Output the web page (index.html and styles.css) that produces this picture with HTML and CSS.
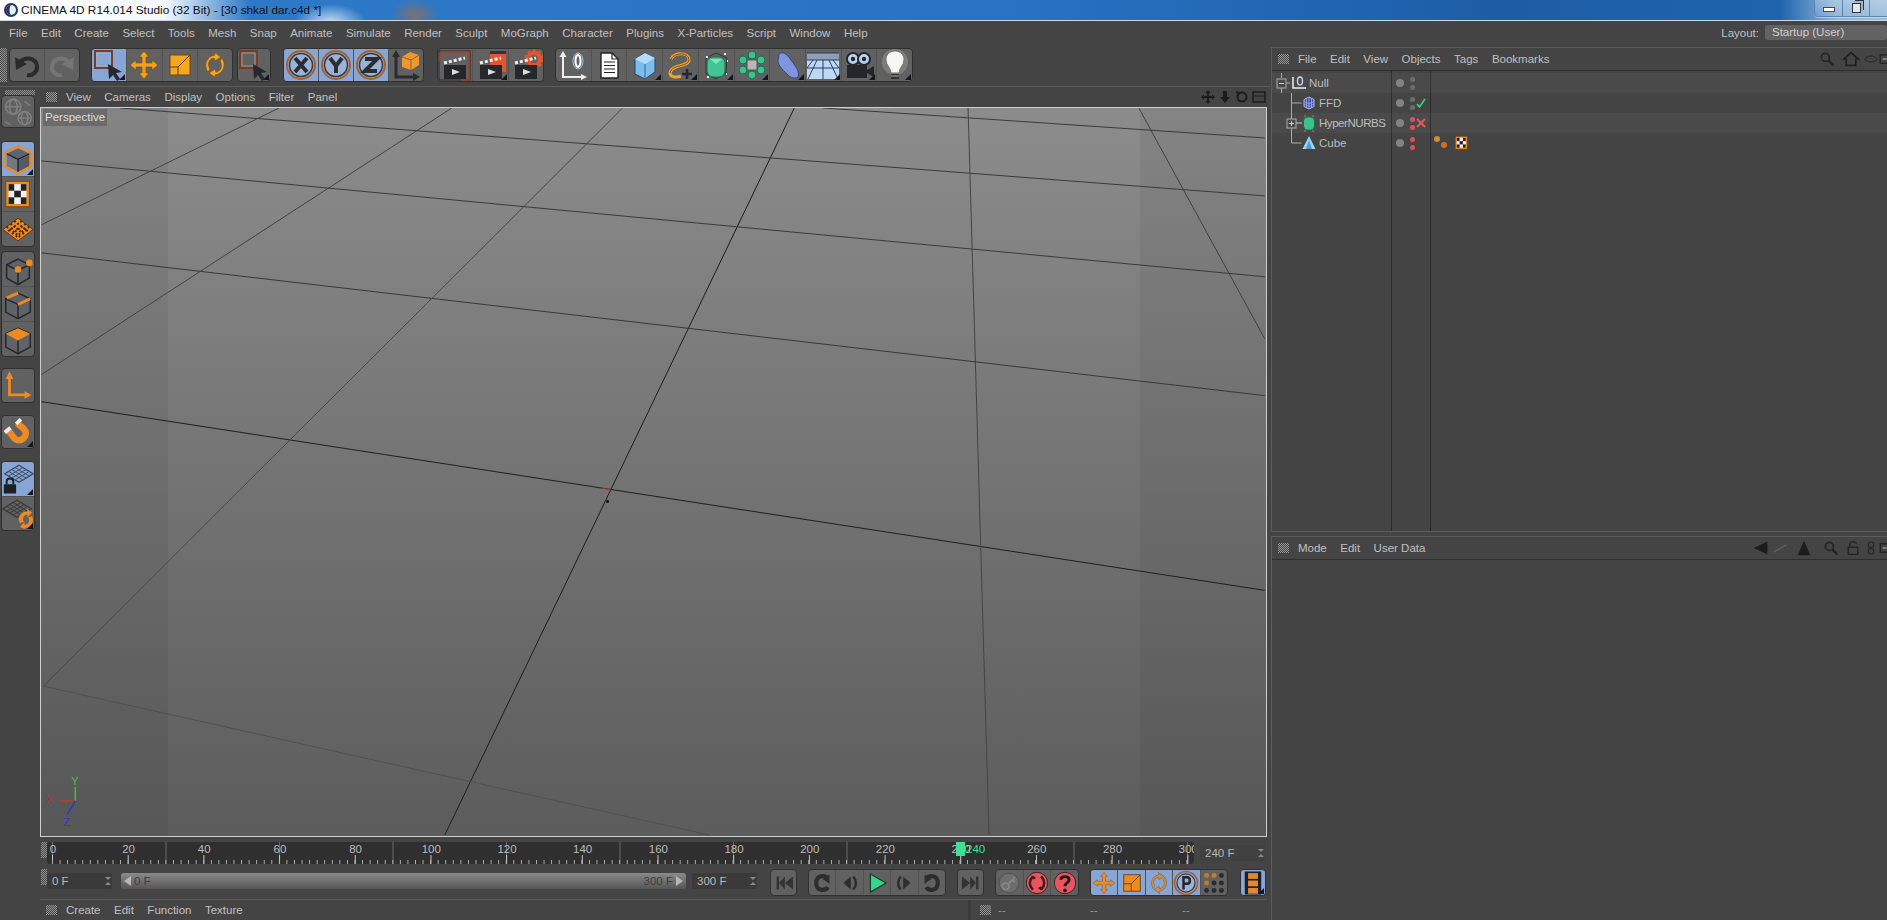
FILE: index.html
```html
<!DOCTYPE html>
<html lang="en">
<head>
<meta charset="utf-8">
<title>CINEMA 4D R14.014 Studio</title>
<link rel="stylesheet" href="styles.css">
</head>
<body>
<svg class="sprite" aria-hidden="true">
  <symbol id="i-undo" viewBox="0 0 36 34"><path d="M11 14c6-6 16-4 17 4 1 6-5 10-10 9" fill="none" stroke="#2b2b2b" stroke-width="4"/><path d="M6 9l1 13 11-6z" fill="#2b2b2b"/></symbol>
  <symbol id="i-redo" viewBox="0 0 36 34"><path d="M25 14c-6-6-16-4-17 4-1 6 5 10 10 9" fill="none" stroke="#757575" stroke-width="4"/><path d="M30 9l-1 13-11-6z" fill="#757575"/></symbol>
  <symbol id="i-select" viewBox="0 0 36 34"><rect x="4" y="3" width="17" height="17" fill="none" stroke="#7a3a30" stroke-width="2"/><rect x="6" y="5" width="13" height="13" fill="none" stroke="#b9b0a8" stroke-width=".7"/><path d="M17 16l14 8-6 1 4 6-3 2-4-6-4 4z" fill="#26282c"/></symbol>
  <symbol id="i-move" viewBox="0 0 36 34"><path d="M18 3l5 6h-3v6h6v-3l6 5-6 5v-3h-6v6h3l-5 6-5-6h3v-6h-6v3l-6-5 6-5v3h6V9h-3z" fill="#f0a01e" stroke="#6b4a18" stroke-width=".6"/></symbol>
  <symbol id="i-scale" viewBox="0 0 36 34"><rect x="8" y="7" width="20" height="20" fill="#f5a81e" stroke="#6b4a18"/><path d="M16 19L28 7M8 19h8v8" fill="none" stroke="#5a3d10" stroke-width="1"/></symbol>
  <symbol id="i-rotate" viewBox="0 0 36 34"><path d="M11 24C6 17 10 8 18 7l-1-3 7 5-6 4-1-3c-5 1-7 6-4 11zM25 10c5 7 1 16-7 17l1 3-7-5 6-4 1 3c5-1 7-6 4-11z" fill="#f3a51f" stroke="#6b4a18" stroke-width=".6"/></symbol>
  <symbol id="i-x" viewBox="0 0 36 34"><circle cx="18" cy="17" r="14" fill="none" stroke="#a8602c" stroke-width="2"/><circle cx="18" cy="17" r="11.5" fill="#9bb2d6" stroke="#3a3a3a" stroke-width="1.5"/><path d="M12 10l12 14M24 10L12 24" stroke="#2a2d33" stroke-width="4"/></symbol>
  <symbol id="i-y" viewBox="0 0 36 34"><circle cx="18" cy="17" r="14" fill="none" stroke="#a8602c" stroke-width="2"/><circle cx="18" cy="17" r="11.5" fill="#9bb2d6" stroke="#3a3a3a" stroke-width="1.5"/><path d="M12 10l6 8 6-8M18 17v8" fill="none" stroke="#2a2d33" stroke-width="4"/></symbol>
  <symbol id="i-z" viewBox="0 0 36 34"><circle cx="18" cy="17" r="14" fill="none" stroke="#a8602c" stroke-width="2"/><circle cx="18" cy="17" r="11.5" fill="#9bb2d6" stroke="#3a3a3a" stroke-width="1.5"/><path d="M12 11h12L12 23h12" fill="none" stroke="#2a2d33" stroke-width="4"/></symbol>
  <symbol id="i-coord" viewBox="0 0 36 34"><path d="M8 6v23h20" fill="none" stroke="#2b2c30" stroke-width="3"/><path d="M8 2l4 7H4zM32 29l-7 4v-8z" fill="#2b2c30"/><path d="M14 9l8-5 9 3v10l-8 5-9-3z" fill="#ee9830"/><path d="M14 9l9 3 8-5M23 12v10" fill="none" stroke="#a85f14"/></symbol>
  <symbol id="i-clap" viewBox="0 0 36 34"><rect x="7" y="17" width="22" height="14" fill="#26272a"/><path d="M7 15l21-5" stroke="#eee" stroke-width="3" stroke-dasharray="3 2"/><path d="M15 21l8 3-8 3z" fill="#ddd"/></symbol>
  <symbol id="i-render1" viewBox="0 0 36 34"><rect x="2" y="3" width="31" height="29" fill="none" stroke="#2a2a2a"/><path d="M3 4h29v28h-8" fill="none" stroke="#a83f2b" stroke-width="1.6"/><path d="M3 4v9" stroke="#a83f2b" stroke-width="1.6"/><use href="#i-clap"/></symbol>
  <symbol id="i-render2" viewBox="0 0 36 34"><rect x="17" y="3" width="16" height="21" fill="#e2562b"/><rect x="17" y="3" width="16" height="3" fill="#333"/><use href="#i-clap"/></symbol>
  <symbol id="i-render3" viewBox="0 0 36 34"><circle cx="26" cy="11" r="6" fill="none" stroke="#e2562b" stroke-width="4"/><circle cx="26" cy="11" r="8.5" fill="none" stroke="#e2562b" stroke-width="2.5" stroke-dasharray="3 2.5"/><use href="#i-clap"/></symbol>
  <symbol id="i-null" viewBox="0 0 36 34"><path d="M8 7v22h20" fill="none" stroke="#eee" stroke-width="2"/><path d="M8 3l3.500 6h-7zM32 29l-6 3v-6z" fill="#eee"/><ellipse cx="23" cy="13" rx="5" ry="8" fill="none" stroke="#a8c6ec" stroke-width="1"/><ellipse cx="23" cy="13" rx="2.500" ry="6" fill="none" stroke="#fff" stroke-width="2"/></symbol>
  <symbol id="i-doc" viewBox="0 0 36 34"><path d="M10 5h11l6 6v19H10z" fill="#fff" stroke="#222" stroke-width="1.400"/><path d="M21 5v6h6M13 14h11M13 17.500h11M13 21h11M13 24.500h11" fill="none" stroke="#222" stroke-width="1.200"/></symbol>
  <symbol id="i-cube" viewBox="0 0 36 34"><path d="M8 11l10-6 10 5v14l-10 7-10-5z" fill="#7bbdee" stroke="#2a4868"/><path d="M8 11l10 5 10-6-10-5z" fill="#b5dcf8"/><path d="M18 16v15" stroke="#3a6790"/></symbol>
  <symbol id="i-spline" viewBox="0 0 36 34"><path d="M9 11c4-7 18-7 18 1 0 7-18 4-19 13 0 4 6 5 11 3" fill="none" stroke="#f0a428" stroke-width="3"/><path d="M9 11c4-7 18-7 18 1 0 7-18 4-19 13" fill="none" stroke="#222" stroke-width=".6"/><path d="M25 21v10M20 26h10" stroke="#26282c" stroke-width="2.600"/></symbol>
  <symbol id="i-subd" viewBox="0 0 36 34"><path d="M8 10l10-5 11 5-1 15-10 6-10-5z" fill="none" stroke="#333" stroke-width="1"/><rect x="9" y="9" width="18" height="20" rx="6" fill="#43c492" stroke="#1d6d50"/><path d="M12 11h12l-6 5z" fill="#7fe4bd"/><path d="M8 9h2M26 6h2M29 13h1M9 29h2M28 26h1" stroke="#eee" stroke-width="2"/></symbol>
  <symbol id="i-cloner" viewBox="0 0 36 34"><g fill="#3cc08c" stroke="#1d6d50"><circle cx="18" cy="7" r="4"/><circle cx="27" cy="12" r="4"/><circle cx="27" cy="22" r="4"/><circle cx="18" cy="27" r="4"/><circle cx="9" cy="22" r="4"/><circle cx="9" cy="12" r="4"/></g><rect x="13" y="12" width="10" height="10" fill="#b8b8b8" stroke="#555"/></symbol>
  <symbol id="i-bend" viewBox="0 0 36 34"><path d="M9 6c4-3 8 0 12 6s9 11 7 17c-3 2-7 1-10-2S8 18 8 13z" fill="#7f95e0" stroke="#37457e"/></symbol>
  <symbol id="i-floor" viewBox="0 0 36 34"><rect x="2" y="5" width="32" height="26" fill="#bcd8f8"/><rect x="2" y="5" width="32" height="7" fill="#8d9fb6"/><path d="M2 5h32M2 12h32M2 20h32M18 12v19M12 12L3 31M24 12l9 19M8 12l-6 8M28 12l6 8" fill="none" stroke="#2d3f5a" stroke-width="1"/></symbol>
  <symbol id="i-camera" viewBox="0 0 36 34"><rect x="6" y="17" width="20" height="13" fill="#24262b"/><path d="M26 22l7-4v11l-7-4z" fill="#24262b"/><circle cx="12" cy="11" r="6" fill="#b6d4f2" stroke="#24262b" stroke-width="2"/><circle cx="23" cy="11" r="6" fill="#b6d4f2" stroke="#24262b" stroke-width="2"/><circle cx="12" cy="11" r="2.200" fill="#24262b"/><circle cx="23" cy="11" r="2.200" fill="#24262b"/></symbol>
  <symbol id="i-light" viewBox="0 0 36 34"><circle cx="18" cy="14" r="13" fill="#fff" opacity=".18"/><path d="M18 3c6 0 9 4 9 9 0 5-5 8-5 13h-8c0-5-5-8-5-13 0-5 3-9 9-9z" fill="#f6f6f2" stroke="#777"/><path d="M14 26h8v5h-8z" fill="#333"/><path d="M14 28h8" stroke="#aaa"/></symbol>
  <symbol id="i-modeobj" viewBox="0 0 36 34"><path d="M18 3l14 7v14l-14 8-14-8V10z" fill="none" stroke="#ee8a22" stroke-width="2.500"/><path d="M6 11l12 6 12-6-12-6z" fill="#5c6470"/><path d="M6 12l12 6v12L6 24z" fill="#74777c"/><path d="M30 12l-12 6v12l12-6z" fill="#575a60"/><path d="M6 11l12 6 12-6M18 17v13" fill="none" stroke="#25272b" stroke-width="1.600"/></symbol>
  <symbol id="i-check" viewBox="0 0 36 34"><rect x="5" y="3" width="25" height="27" fill="#ee8a22" stroke="#7a4010"/><rect x="8" y="6" width="19" height="21" fill="#f2f2f2"/><g fill="#222"><rect x="8" y="6" width="6" height="7"/><rect x="21" y="6" width="6" height="7"/><rect x="14" y="13" width="7" height="7"/><rect x="8" y="20" width="6" height="7"/><rect x="21" y="20" width="6" height="7"/></g></symbol>
  <symbol id="i-gridmode" viewBox="0 0 36 34"><path d="M18 5l16 12-16 12L2 17z" fill="#ee8a22" stroke="#5f3410"/><path d="M10 11l16 12M14 8l16 12M6 14l16 12M26 11L10 23M22 8L6 20M30 14L14 26" stroke="#4a2a0e" stroke-width="2.200" stroke-dasharray="2 2"/></symbol>
  <symbol id="i-pts" viewBox="0 0 36 34"><path d="M18 6l12 6v14l-12 7-12-7V12z" fill="#5f6267" stroke="#25272b" stroke-width="1.600"/><path d="M6 12l12 6 12-6M18 18v15" fill="none" stroke="#25272b" stroke-width="1.600"/><circle cx="18" cy="17" r="3.500" fill="#ee8a22"/><circle cx="30" cy="10" r="3.500" fill="#ee8a22"/></symbol>
  <symbol id="i-edges" viewBox="0 0 36 34"><path d="M18 5l13 6v14l-13 7-13-7V11z" fill="#5f6267" stroke="#25272b" stroke-width="1.600"/><path d="M5 11l13 6 13-6M18 17v15" fill="none" stroke="#25272b" stroke-width="1.600"/><path d="M6 10l12-5M18 17l13-6" stroke="#ee8a22" stroke-width="3"/></symbol>
  <symbol id="i-polys" viewBox="0 0 36 34"><path d="M18 5l13 6v14l-13 7-13-7V11z" fill="#5f6267" stroke="#25272b" stroke-width="1.600"/><path d="M5 11l13 7 13-7-13-6z" fill="#ee8a22"/><path d="M18 18v14" stroke="#25272b" stroke-width="1.600"/></symbol>
  <symbol id="i-axes" viewBox="0 0 36 34"><path d="M9 8v19h21" fill="none" stroke="#ee8a22" stroke-width="3"/><path d="M9 2l4 8H5zM32 27l-7 4v-8z" fill="#ee8a22"/></symbol>
  <symbol id="i-magnet" viewBox="0 0 36 34"><path d="M8 15l6 8c3 3 7 3 10 0 3-3 3-7 0-10l-7-6" fill="none" stroke="#ee8a22" stroke-width="7"/><path d="M4 17l6-5M16 8l5-5" stroke="#eee" stroke-width="4"/></symbol>
  <symbol id="i-gridlock" viewBox="0 0 36 34"><path d="M19 3l15 9-15 9-15-9z" fill="none" stroke="#3c4a60" stroke-width="1.300"/><path d="M11.500 7.500l15 9M15 5.500l15 9M8 9.500l15 9M26.500 7.500l-15 9M23 5.500l-15 9M30 9.500l-15 9" stroke="#3c4a60" stroke-width="1"/><rect x="3" y="23" width="13" height="10" rx="1" fill="#1d2026"/><path d="M6 23v-3c0-4 7-4 7 0v3" fill="none" stroke="#1d2026" stroke-width="2"/></symbol>
  <symbol id="i-gridrot" viewBox="0 0 36 34"><path d="M17 3l15 9-15 9-15-9z" fill="none" stroke="#383838" stroke-width="1.300"/><path d="M9.500 7.500l15 9M13 5.500l15 9M6 9.500l15 9M24.500 7.500l-15 9M21 5.500l-15 9M28 9.500l-15 9" stroke="#383838" stroke-width="1"/><path d="M20 27c-4-7 3-13 8-12l-1-3 6 4-5 5v-3c-3 0-6 3-4 8zM33 20c3 7-3 13-8 12l1 2-6-3 5-5v3c4 0 6-4 4-8z" fill="#ee8a22"/></symbol>
  <symbol id="i-tstart" viewBox="0 0 36 34"><path d="M9 9h3v16H9zM19 9v16l-7-8zM29 9v16l-10-8z" fill="#333"/></symbol>
  <symbol id="i-tend" viewBox="0 0 36 34"><path d="M27 9h-3v16h3zM17 9v16l7-8zM7 9v16l10-8z" fill="#333"/></symbol>
  <symbol id="i-cback" viewBox="0 0 36 34"><path d="M25 12c-3-5-14-5-14 5s11 10 14 5" fill="none" stroke="#2d2d2d" stroke-width="5"/><path d="M27 7v11l-8-6z" fill="#2d2d2d"/></symbol>
  <symbol id="i-cfwd" viewBox="0 0 36 34"><path d="M11 12c3-5 14-5 14 5s-11 10-14 5" fill="none" stroke="#2d2d2d" stroke-width="5"/><path d="M9 7v11l8-6z" fill="#2d2d2d"/></symbol>
  <symbol id="i-sback" viewBox="0 0 36 34"><path d="M19 9v16l-9-8z" fill="#2d2d2d"/><path d="M22 9c4 5 4 11 0 16" fill="none" stroke="#2d2d2d" stroke-width="3"/></symbol>
  <symbol id="i-sfwd" viewBox="0 0 36 34"><path d="M17 9v16l9-8z" fill="#2d2d2d"/><path d="M14 9c-4 5-4 11 0 16" fill="none" stroke="#2d2d2d" stroke-width="3"/></symbol>
  <symbol id="i-play" viewBox="0 0 36 34"><path d="M10 6l19 11-19 11z" fill="#35d58e" stroke="#123d2a" stroke-width="1.500"/></symbol>
  <symbol id="i-key" viewBox="0 0 36 34"><circle cx="18" cy="17" r="12" fill="#6e6e6e" stroke="#4d4d4d"/><circle cx="14" cy="21" r="4" fill="none" stroke="#888" stroke-width="2"/><path d="M17 18l8-8M22 13l3 3" stroke="#888" stroke-width="2"/></symbol>
  <symbol id="i-rec" viewBox="0 0 36 34"><circle cx="18" cy="17" r="13" fill="#e8545f" stroke="#3a2222" stroke-width="1.200"/><path d="M13 9c-5 5-5 11 0 16M23 9c5 5 5 11 0 16" fill="none" stroke="#3a1d1d" stroke-width="3"/><path d="M13 8l4 3-4 2zM23 26l-4-3 4-2z" fill="#3a1d1d"/></symbol>
  <symbol id="i-help" viewBox="0 0 36 34"><circle cx="18" cy="17" r="13" fill="#e8545f" stroke="#3a2222" stroke-width="1.200"/><path d="M13 13c0-5 10-5 10 0 0 4-5 3-5 8" fill="none" stroke="#2a1414" stroke-width="3.500"/><circle cx="18" cy="26" r="2.200" fill="#2a1414"/></symbol>
  <symbol id="i-moveo" viewBox="0 0 36 34"><path d="M18 4l4 5h-2v6h6v-2l5 4-5 4v-2h-6v6h2l-4 5-4-5h2v-6h-6v2l-5-4 5-4v2h6V9h-2z" fill="#ee8a22" stroke="#6b4a18" stroke-width=".5"/></symbol>
  <symbol id="i-scaleo" viewBox="0 0 36 34"><rect x="8" y="7" width="20" height="20" fill="#ee8a22" stroke="#5b3a10"/><path d="M17 18L28 7M8 18h9v9" fill="none" stroke="#5b3a10"/></symbol>
  <symbol id="i-roto" viewBox="0 0 36 34"><path d="M11 24C6 17 10 8 18 7l-1-3 7 5-6 4-1-3c-5 1-7 6-4 11zM25 10c5 7 1 16-7 17l1 3-7-5 6-4 1 3c5-1 7-6 4-11z" fill="#d98b3c" stroke="#5d4a35" stroke-width=".5"/></symbol>
  <symbol id="i-p" viewBox="0 0 36 34"><circle cx="18" cy="17" r="14" fill="none" stroke="#a8602c" stroke-width="2"/><circle cx="18" cy="17" r="11" fill="#9bb2d6" stroke="#3a3a3a" stroke-width="1.500"/><path d="M15 25V10h4c5 0 5 8 0 8h-4" fill="none" stroke="#22252b" stroke-width="3"/></symbol>
  <symbol id="i-dots" viewBox="0 0 36 34"><g fill="#2b2b2b"><circle cx="9" cy="8" r="3" fill="#c27a2d"/><circle cx="18" cy="8" r="3" fill="#c27a2d"/><circle cx="27" cy="8" r="3"/><circle cx="9" cy="17" r="3" fill="#c27a2d"/><circle cx="18" cy="17" r="3"/><circle cx="27" cy="17" r="3"/><circle cx="9" cy="26" r="3"/><circle cx="18" cy="26" r="3"/><circle cx="27" cy="26" r="3"/></g></symbol>
  <symbol id="i-film" viewBox="0 0 36 34"><rect x="8" y="3" width="20" height="28" fill="#1d2026"/><rect x="12" y="5" width="12" height="7" fill="#e28b2e"/><rect x="12" y="14" width="12" height="7" fill="#e28b2e"/><rect x="12" y="23" width="12" height="7" fill="#e28b2e"/></symbol>
  <symbol id="i-search" viewBox="0 0 20 20"><circle cx="8" cy="8" r="5" fill="none" stroke="#242424" stroke-width="2"/><path d="M12 12l6 6" stroke="#242424" stroke-width="3"/></symbol>
  <symbol id="i-home" viewBox="0 0 20 20"><path d="M10 2L1 10h3v8h12v-8h3z" fill="none" stroke="#1f1f1f" stroke-width="2"/></symbol>
  <symbol id="i-eye" viewBox="0 0 20 20"><path d="M2 10c4-5 12-5 16 0-4 5-12 5-16 0z" fill="none" stroke="#222" stroke-width="1.200"/></symbol>
  <symbol id="i-box" viewBox="0 0 20 20"><rect x="2" y="3" width="15" height="14" fill="none" stroke="#202020" stroke-width="2"/><path d="M6 10h7" stroke="#888" stroke-width="3"/></symbol>
  <symbol id="i-left" viewBox="0 0 20 20"><path d="M18 2v16L1 10z" fill="#1d1d1d"/></symbol>
  <symbol id="i-slash" viewBox="0 0 20 20"><path d="M2 15L18 6" stroke="#5c5c5c" stroke-width="2"/></symbol>
  <symbol id="i-up" viewBox="0 0 20 20"><path d="M10 1l8 18H2z" fill="#1d1d1d"/></symbol>
  <symbol id="i-lock" viewBox="0 0 20 20"><rect x="4" y="9" width="12" height="9" fill="none" stroke="#222" stroke-width="1.500"/><path d="M6 9V5c0-4 8-4 8 0" fill="none" stroke="#222" stroke-width="1.500"/></symbol>
  <symbol id="i-eight" viewBox="0 0 20 20"><circle cx="10" cy="6" r="3.500" fill="none" stroke="#222" stroke-width="1.300"/><circle cx="10" cy="14" r="3.500" fill="none" stroke="#222" stroke-width="1.300"/></symbol>
  <symbol id="i-arrows" viewBox="0 0 14 14"><path d="M7 0l2.500 3H8v3h3V4.500L14 7l-3 2.500V8H8v3h1.500L7 14l-2.500-3H6V8H3v1.500L0 7l3-2.500V6h3V3H4.500z" fill="#1c1c1c"/></symbol>
  <symbol id="i-down" viewBox="0 0 14 14"><path d="M5 1h4v6h3l-5 6-5-6h3z" fill="#1c1c1c"/></symbol>
  <symbol id="i-cycle" viewBox="0 0 14 14"><circle cx="7" cy="7" r="4.500" fill="none" stroke="#1c1c1c" stroke-width="2"/><path d="M1 1l4 1-3 3z" fill="#1c1c1c"/></symbol>
  <symbol id="i-win" viewBox="0 0 14 14"><rect x="1" y="2" width="12" height="10" fill="none" stroke="#1c1c1c" stroke-width="1.500"/><path d="M1 6h12" stroke="#1c1c1c"/></symbol>
  <symbol id="i-home3d" viewBox="0 0 36 34"><g fill="none" stroke="#858585" stroke-width="1.500"><circle cx="13" cy="12" r="8"/><ellipse cx="13" cy="12" rx="4" ry="8"/><path d="M5 12h16"/><circle cx="25" cy="24" r="7"/><ellipse cx="25" cy="24" rx="3.500" ry="7"/><path d="M18 24h14M25 6l6 5M4 28l6 3"/></g></symbol>
</svg>

<header class="titlebar">
  <svg class="app-logo" viewBox="0 0 16 16"><circle cx="8" cy="8" r="7" fill="#22365c"/><circle cx="8" cy="8" r="5" fill="#e8eef8"/><path d="M8 3a5 5 0 0 0 0 10c-2-2-2-8 0-10z" fill="#22365c"/></svg>
  <span class="title-text">CINEMA 4D R14.014 Studio (32 Bit) - [30 shkal dar.c4d *]</span>
  <div class="win-btns">
    <span class="win-btn"><i class="win-min"></i></span>
    <span class="win-btn"><i class="win-max"></i></span>
    <span class="win-btn win-close"></span>
  </div>
</header>

<nav class="menubar">
  <span>File</span><span>Edit</span><span>Create</span><span>Select</span><span>Tools</span><span>Mesh</span><span>Snap</span><span>Animate</span><span>Simulate</span><span>Render</span><span>Sculpt</span><span>MoGraph</span><span>Character</span><span>Plugins</span><span>X-Particles</span><span>Script</span><span>Window</span><span>Help</span>
  <div class="layout-pick"><label>Layout:</label><span class="dropdown">Startup (User)</span></div>
</nav>

<div class="workspace">
  <section class="leftcol">
    <div class="toolbar">
      <span class="grip grip-tall"></span>
      <div class="grp g1"><span class="btn"><svg><use href="#i-undo"/></svg></span><span class="btn"><svg><use href="#i-redo"/></svg></span></div>
      <div class="grp g2"><span class="btn on more"><svg><use href="#i-select"/></svg></span><span class="btn"><svg><use href="#i-move"/></svg></span><span class="btn"><svg><use href="#i-scale"/></svg></span><span class="btn"><svg><use href="#i-rotate"/></svg></span></div>
      <div class="grp g3"><span class="btn more"><svg><use href="#i-select"/></svg></span></div>
      <div class="grp g4"><span class="btn on"><svg><use href="#i-x"/></svg></span><span class="btn on"><svg><use href="#i-y"/></svg></span><span class="btn on"><svg><use href="#i-z"/></svg></span><span class="btn"><svg><use href="#i-coord"/></svg></span></div>
      <div class="grp g5"><span class="btn"><svg><use href="#i-render1"/></svg></span><span class="btn more"><svg><use href="#i-render2"/></svg></span><span class="btn"><svg><use href="#i-render3"/></svg></span></div>
      <div class="grp g6"><span class="btn"><svg><use href="#i-null"/></svg></span><span class="btn"><svg><use href="#i-doc"/></svg></span><span class="btn more"><svg><use href="#i-cube"/></svg></span><span class="btn more"><svg><use href="#i-spline"/></svg></span><span class="btn more"><svg><use href="#i-subd"/></svg></span><span class="btn more"><svg><use href="#i-cloner"/></svg></span><span class="btn more"><svg><use href="#i-bend"/></svg></span><span class="btn more"><svg><use href="#i-floor"/></svg></span><span class="btn more"><svg><use href="#i-camera"/></svg></span><span class="btn more"><svg><use href="#i-light"/></svg></span></div>
    </div>

    <div class="view-row">
      <aside class="sidebar">
        <span class="grip grip-wide"></span>
        <div class="grp col s1"><span class="btn"><svg><use href="#i-home3d"/></svg></span></div>
        <div class="grp col s2"><span class="btn on more"><svg><use href="#i-modeobj"/></svg></span><span class="btn"><svg><use href="#i-check"/></svg></span><span class="btn"><svg><use href="#i-gridmode"/></svg></span></div>
        <div class="grp col s3"><span class="btn"><svg><use href="#i-pts"/></svg></span><span class="btn"><svg><use href="#i-edges"/></svg></span><span class="btn"><svg><use href="#i-polys"/></svg></span></div>
        <div class="grp col s4"><span class="btn"><svg><use href="#i-axes"/></svg></span></div>
        <div class="grp col s5"><span class="btn more"><svg><use href="#i-magnet"/></svg></span></div>
        <div class="grp col s6"><span class="btn on more"><svg><use href="#i-gridlock"/></svg></span><span class="btn more"><svg><use href="#i-gridrot"/></svg></span></div>
      </aside>

      <main class="viewcol">
        <div class="panel-head view-head">
          <span class="grip"></span>
          <span>View</span><span>Cameras</span><span>Display</span><span>Options</span><span>Filter</span><span>Panel</span>
          <div class="head-icons"><svg><use href="#i-arrows"/></svg><svg><use href="#i-down"/></svg><svg><use href="#i-cycle"/></svg><svg><use href="#i-win"/></svg></div>
        </div>
        <div class="canvas">
          <svg class="scene" viewBox="41 108 1226 729">
            <g fill="none">
              <path d="M41 402L1266 591" stroke="#1e1e1e"/>
              <path d="M445 836L795 108" stroke="#1c1c1c"/>
              <path d="M969 108L990 836" stroke="#444"/>
              <path d="M41 161L1266 277" stroke="#3a3a3a"/>
              <path d="M41 253L1266 396" stroke="#383838"/>
              <path d="M120 108L1266 196" stroke="#3a3a3a"/>
              <path d="M824 108L1266 138" stroke="#3a3a3a"/>
              <path d="M43 687L710 836" stroke="#505050"/>
              <path d="M1140 108L1266 339" stroke="#404040"/>
              <path d="M623 108L43 687" stroke="#484848"/>
              <path d="M452 108L41 375" stroke="#424242"/>
              <path d="M279 108L41 225" stroke="#424242"/>
            </g>
            <path d="M603 489l8 1" stroke="#b33" stroke-width="1"/>
            <circle cx="608" cy="502" r="1.500" fill="#111"/>
            <path d="M75 802V788" stroke="#3ec13e" stroke-width="1.500"/>
            <path d="M75 802H59" stroke="#c33" stroke-width="1.500"/>
            <path d="M75 802L67 815" stroke="#33c" stroke-width="1.500"/>
            <text x="71" y="786" class="ax ax-y">Y</text>
            <text x="46" y="804" class="ax ax-x">X</text>
            <text x="63" y="827" class="ax ax-z">Z</text>
          </svg>
          <span class="persp">Perspective</span>
        </div>
        <div class="timeline">
          <span class="grip grip-time"></span>
          <div class="ruler">
            <div class="ruler-labels"><span>0</span><span>20</span><span>40</span><span>60</span><span>80</span><span>100</span><span>120</span><span>140</span><span>160</span><span>180</span><span>200</span><span>220</span><span>240</span><span>260</span><span>280</span><span>300</span></div>
            <span class="playhead"><em>240</em></span>
          </div>
          <span class="frame-field cur">240 F<i class="spin"></i></span>
        </div>
        <div class="transport">
          <span class="grip grip-time"></span>
          <span class="frame-field start">0 F<i class="spin"></i></span>
          <div class="slider"><i class="sl-left"></i><span>0 F</span><span class="sl-end">300 F</span><i class="sl-right"></i></div>
          <span class="frame-field end">300 F<i class="spin"></i></span>
          <div class="grp t1"><span class="btn"><svg><use href="#i-tstart"/></svg></span></div>
          <div class="grp t2"><span class="btn"><svg><use href="#i-cback"/></svg></span><span class="btn"><svg><use href="#i-sback"/></svg></span><span class="btn"><svg><use href="#i-play"/></svg></span><span class="btn"><svg><use href="#i-sfwd"/></svg></span><span class="btn"><svg><use href="#i-cfwd"/></svg></span></div>
          <div class="grp t3"><span class="btn"><svg><use href="#i-tend"/></svg></span></div>
          <div class="grp t4"><span class="btn"><svg><use href="#i-key"/></svg></span><span class="btn"><svg><use href="#i-rec"/></svg></span><span class="btn"><svg><use href="#i-help"/></svg></span></div>
          <div class="grp t5"><span class="btn on"><svg><use href="#i-moveo"/></svg></span><span class="btn on"><svg><use href="#i-scaleo"/></svg></span><span class="btn on"><svg><use href="#i-roto"/></svg></span><span class="btn on"><svg><use href="#i-p"/></svg></span><span class="btn"><svg><use href="#i-dots"/></svg></span></div>
          <div class="grp t6"><span class="btn on more"><svg><use href="#i-film"/></svg></span></div>
        </div>
        <div class="bottom">
          <div class="panel-head mat-head"><span class="grip"></span><span>Create</span><span>Edit</span><span>Function</span><span>Texture</span></div>
          <div class="panel-head coord-head"><span class="grip"></span><span>--</span><span>--</span><span>--</span></div>
        </div>
      </main>
    </div>
  </section>

  <section class="rightcol">
    <div class="panel objects">
      <div class="panel-head">
        <span class="grip"></span>
        <span>File</span><span>Edit</span><span>View</span><span>Objects</span><span>Tags</span><span>Bookmarks</span>
        <div class="head-icons big"><svg class="w24"><use href="#i-search"/></svg><svg class="w24"><use href="#i-home"/></svg><svg class="w16"><use href="#i-eye"/></svg><svg class="w12"><use href="#i-box"/></svg></div>
      </div>
      <div class="list">
        <div class="row odd">
          <div class="name">
            <svg class="tree w37" viewBox="0 0 37 20"><path d="M9.500 0v5M9.500 15v5M14 10h4" stroke="#aaa" fill="none"/><rect x="5" y="6" width="9" height="9" fill="none" stroke="#aaa"/><path d="M7 10.500h5" stroke="#ccc"/><path d="M21 4v11h13" fill="none" stroke="#eee" stroke-width="1.500"/><ellipse cx="28" cy="8" rx="2.500" ry="4" fill="none" stroke="#cfe0f5" stroke-width="1.300"/></svg>
            <span>Null</span>
          </div>
          <div class="vis"><b class="dot"></b><span class="mini"><b></b><b></b></span></div>
        </div>
        <div class="row">
          <div class="name">
            <svg class="tree w47" viewBox="0 0 47 20"><path d="M19.500 0v20M19.500 10h10" stroke="#aaa" fill="none"/><path d="M37 4l5 2.500v7L37 16l-5-2.500v-7z" fill="#3e4fa8" stroke="#aeb9e6"/><path d="M32 8.500l5 2.500 5-2.500M32 11l5 2.500 5-2.500M37 4.500V16M34.500 5.500v9.500M39.500 5.500v9.500" fill="none" stroke="#aeb9e6" stroke-width=".7"/></svg>
            <span>FFD</span>
          </div>
          <div class="vis"><b class="dot"></b><span class="mini"><b></b><b></b></span><svg class="flag" viewBox="0 0 10 10"><path d="M1 6l2.500 3L9 1" fill="none" stroke="#41d08d" stroke-width="1.600"/></svg></div>
        </div>
        <div class="row odd">
          <div class="name">
            <svg class="tree w47" viewBox="0 0 47 20"><path d="M19.500 0v6M19.500 15v5" stroke="#aaa" fill="none"/><rect x="15" y="6" width="9" height="9" fill="none" stroke="#aaa"/><path d="M17 10.500h5M19.500 8v5M24 10h6" stroke="#ccc"/><rect x="31.500" y="4" width="11" height="13" rx="4" fill="#3cc08c" stroke="#1d6d50"/><path d="M32 3h2M40 3h2M32 18h2M40 18h2" stroke="#d66" stroke-width="1"/></svg>
            <span class="hn">HyperNURBS</span>
          </div>
          <div class="vis"><b class="dot"></b><span class="mini red"><b></b><b></b></span><svg class="flag" viewBox="0 0 10 10"><path d="M1 1l8 8M9 1l-8 8" stroke="#e25a5a" stroke-width="2"/></svg></div>
        </div>
        <div class="row">
          <div class="name">
            <svg class="tree w47" viewBox="0 0 47 20"><path d="M19.500 0v10h10" stroke="#aaa" fill="none"/><path d="M37 3l6.500 13h-13z" fill="#9ad4f5"/><path d="M37 7l3 9h-6z" fill="#4d9ed8"/></svg>
            <span>Cube</span>
          </div>
          <div class="vis"><b class="dot"></b><span class="mini red"><b></b><b></b></span></div>
          <div class="tags">
            <svg class="tag-pts" viewBox="0 0 16 16"><circle cx="4" cy="4" r="3" fill="#d08b3a"/><circle cx="11" cy="10" r="3" fill="#d0701f"/></svg>
            <svg class="tag-tex" viewBox="0 0 36 34"><use href="#i-check"/></svg>
          </div>
        </div>
      </div>
    </div>
    <div class="panel attrs">
      <div class="panel-head">
        <span class="grip"></span>
        <span>Mode</span><span>Edit</span><span>User Data</span>
        <div class="head-icons big"><svg class="w20"><use href="#i-left"/></svg><svg class="w18"><use href="#i-slash"/></svg><svg class="w30"><use href="#i-up"/></svg><svg class="w24"><use href="#i-search"/></svg><svg class="w20"><use href="#i-lock"/></svg><svg class="w16"><use href="#i-eight"/></svg><svg class="w12"><use href="#i-box"/></svg></div>
      </div>
    </div>
  </section>
</div>
</body>
</html>
```

FILE: styles.css
```css
* { box-sizing: border-box; }
html, body { margin: 0; height: 100%; }
body {
  width: 1887px;
  height: 920px;
  overflow: hidden;
  background: #444;
  color: #c0c0c0;
  font: 11.5px "Liberation Sans", Arial, sans-serif;
  display: flex;
  flex-direction: column;
}
.sprite { position: absolute; width: 0; height: 0; overflow: hidden; }

.titlebar {
  height: 21px;
  flex: none;
  display: flex;
  align-items: center;
  padding-left: 3px;
  border-bottom: 1px solid #c9d6e6;
  background:
    radial-gradient(ellipse 24px 16px at 415px 15px, rgba(140,110,100,.85), transparent),
    radial-gradient(ellipse 36px 18px at 330px 22px, rgba(220,235,250,.85), transparent),
    linear-gradient(90deg, #fff 0, #f4f7fb 165px, rgba(255,255,255,.5) 205px, rgba(255,255,255,0) 250px),
    linear-gradient(90deg, #2f7bc8 0, #2873c3 1000px, #1d5da6 1500px, #1f63ad 1780px, #8fb4d8 1835px, #9cbddd 1887px);
}
.app-logo { width: 16px; height: 16px; flex: none; }
.title-text {
  margin-left: 2px;
  color: #111;
  font-size: 11.8px;
  white-space: nowrap;
}
.win-btns {
  margin-left: auto;
  margin-right: -19px;
  align-self: flex-start;
  display: flex;
  height: 17px;
  border: 1px solid #5f86b0;
  border-top: 0;
  border-radius: 0 0 4px 4px;
  box-shadow: 0 1px 0 rgba(255,255,255,.4);
}
.win-btn {
  width: 27px;
  display: flex;
  align-items: center;
  justify-content: center;
  border-left: 1px solid rgba(70,105,145,.7);
  background: linear-gradient(rgba(255,255,255,.25), rgba(255,255,255,.05));
}
.win-btn:first-child { border-left: 0; }
.win-close { width: 36px; }
.win-min { width: 12px; height: 5px; background: #fff; border: 1px solid #4a4a4a; margin-top: 3px; }
.win-max { width: 9px; height: 10px; border: 1px solid #333; background: #dfe9f3; box-shadow: 2px -2px 0 0 #9cb4cc, 3px -3px 0 0 #333; }

.menubar {
  height: 25px;
  flex: none;
  display: flex;
  align-items: center;
  gap: 13.5px;
  padding: 0 0 2px 9px;
}
.layout-pick { margin-left: auto; display: flex; align-items: center; gap: 6px; }
.dropdown {
  width: 122px;
  height: 15px;
  line-height: 14px;
  padding-left: 7px;
  border-radius: 3px;
  background: #626262;
  color: #d0d0d0;
}

.workspace { flex: 1; display: flex; min-height: 0; }
.leftcol { width: 1270px; flex: none; display: flex; flex-direction: column; }
.rightcol { flex: 1; display: flex; flex-direction: column; gap: 4px; padding: 1px 0 0 1px; }

.grip {
  display: block;
  flex: none;
  width: 11px;
  height: 11px;
  background: repeating-conic-gradient(#959595 0 25%, transparent 0 50%) 0 0 / 2px 2px;
}
.grip-tall { width: 7px; height: 34px; margin: 0 2px 0 0; }
.grip-wide { width: 30px; height: 5px; margin: 3px 0 0 5px; }
.grip-time { width: 6px; height: 16px; }

.toolbar {
  height: 41px;
  flex: none;
  display: flex;
  align-items: flex-start;
  padding: 2px 0 0 0;
  border-bottom: 1px solid #5c5c5c;
}
.toolbar .grp { height: 34px; }
.g1 { width: 71px; }
.g2 { width: 142px; margin-left: 11px; }
.g3 { width: 34px; margin-left: 4px; }
.g4 { width: 141px; margin-left: 12px; }
.g5 { width: 107px; margin-left: 13px; }
.g6 { width: 358px; margin-left: 11px; }

.grp {
  display: flex;
  background: #616161;
  border: 1px solid #303030;
  border-radius: 4px;
  overflow: hidden;
  flex: none;
}
.grp.col { flex-direction: column; width: 34px; margin-left: 1px; }
.btn {
  flex: 1 1 0;
  min-width: 0;
  min-height: 0;
  position: relative;
  display: flex;
  align-items: center;
  justify-content: center;
  border-left: 1px solid #525252;
}
.btn:first-child { border-left: 0; }
.col .btn { border-left: 0; border-top: 1px solid #525252; }
.col .btn:first-child { border-top: 0; }
.btn svg { width: 36px; height: 34px; flex: none; display: block; }
.col .btn svg { width: 34px; height: 33px; }
.on { background: #87a6d4; }
.more::after {
  content: "";
  position: absolute;
  right: 1px;
  bottom: 1px;
  border-style: solid;
  border-width: 0 0 6px 6px;
  border-color: transparent transparent #11161f transparent;
}

.view-row { flex: 1; display: flex; min-height: 0; }
.sidebar { width: 40px; flex: none; display: flex; flex-direction: column; }
.s1 { height: 33px; margin-top: 0; }
.s2 { height: 106px; margin-top: 13px; }
.s3 { height: 106px; margin-top: 4px; }
.s4 { height: 35px; margin-top: 11px; }
.s5 { height: 34px; margin-top: 12px; }
.s6 { height: 70px; margin-top: 12px; }
.s1 .btn svg { opacity: .9; }

.viewcol { flex: 1; min-width: 0; display: flex; flex-direction: column; padding-right: 3px; }
.panel-head {
  height: 22px;
  flex: none;
  display: flex;
  align-items: center;
  gap: 13.5px;
  padding-left: 6px;
  white-space: nowrap;
}
.panel-head .grip { margin-right: -4.5px; height: 10px; }
.view-head { height: 20px; }
.head-icons { margin-left: auto; display: flex; gap: 3px; padding-right: 1px; align-items: center; }
.head-icons svg { width: 14px; height: 14px; display: block; }
.head-icons.big { gap: 0; margin-right: -4px; padding-right: 0; }
.head-icons.big svg { height: 16px; }
.head-icons.big .w30 { width: 30px; }
.head-icons.big .w24 { width: 24px; }
.head-icons.big .w20 { width: 20px; }
.head-icons.big .w18 { width: 18px; }
.head-icons.big .w16 { width: 16px; }
.head-icons.big .w12 { width: 12px; }

.canvas {
  height: 730px;
  flex: none;
  position: relative;
  border: 1px solid #cfcfcf;
  background:
    linear-gradient(90deg, rgba(0,0,0,.06) 127px, transparent 127px, transparent 1099px, rgba(0,0,0,.06) 1099px),
    linear-gradient(#8c8c8c, #5c5c5c);
}
.scene { display: block; width: 100%; height: 100%; }
.ax { font: 11px "Liberation Sans", sans-serif; }
.ax-y { fill: #3ec13e; }
.ax-x { fill: #b83333; }
.ax-z { fill: #3333c8; }
.persp {
  position: absolute;
  left: 2px;
  top: 1px;
  height: 17px;
  line-height: 17px;
  padding: 0 2px;
  background: #6b6b6b;
  color: #dcdcdc;
  font-size: 11.5px;
}

.timeline { height: 29px; flex: none; display: flex; align-items: flex-start; padding: 5px 0 0 1px; }
.ruler {
  width: 1147px;
  height: 22px;
  position: relative;
  overflow: hidden;
  flex: none;
  border-radius: 3px;
  background:
    linear-gradient(90deg, #b0b0b0 1px, transparent 1px) 5px 100% / 7.57px 4px repeat-x,
    linear-gradient(90deg, #c8c8c8 1px, transparent 1px) 5px 100% / 75.7px 9px repeat-x,
    linear-gradient(90deg, #6a6a6a 1px, transparent 1px) 5px 0 / 113.5px 100% repeat-x,
    #2f2f2f;
}
.ruler-labels { display: flex; margin-left: -32px; line-height: 15px; color: #bcbcbc; font-size: 11.5px; }
.ruler-labels span { flex: 0 0 75.7px; text-align: center; }
.playhead {
  position: absolute;
  left: 909px;
  top: 0;
  width: 9px;
  height: 14px;
  background: #3fe08f;
}
.playhead em { position: absolute; left: 10px; top: 0; font-style: normal; line-height: 15px; color: #3fe08f; }

.frame-field {
  height: 16px;
  flex: none;
  position: relative;
  display: block;
  line-height: 16px;
  padding-left: 5px;
  background: #3a3a3a;
  border-radius: 2px;
  color: #b8b8b8;
}
.frame-field.cur { width: 65px; margin: 3px 0 0 6px; background: #414141; }
.frame-field.start { width: 65px; }
.frame-field.end { width: 65px; margin-left: 6px; }
.spin {
  position: absolute;
  right: 1px;
  top: 4px;
  width: 0;
  height: 8px;
  border-left: 3px solid transparent;
  border-right: 3px solid transparent;
  border-top: 3px solid #8a8a8a;
  border-bottom: 3px solid #8a8a8a;
}

.transport { height: 33px; flex: none; display: flex; align-items: flex-start; padding: 3px 0 0 1px; }
.transport > .frame-field, .transport > .slider { margin-top: 4px; }
.transport .grp { height: 27px; }
.transport .btn svg { width: 30px; height: 28px; }
.slider {
  width: 565px;
  height: 16px;
  margin-left: 9px;
  display: flex;
  align-items: center;
  flex: none;
  border-radius: 3px;
  background: linear-gradient(#8a8a8a, #565656);
  color: #3d3d3d;
  padding: 0 3px;
  line-height: 16px;
}
.sl-left { width: 0; height: 0; border: 5px solid transparent; border-right: 7px solid #b8b8b8; border-left: 0; margin-right: 3px; }
.sl-right { width: 0; height: 0; border: 5px solid transparent; border-left: 7px solid #b8b8b8; border-right: 0; margin-left: 3px; }
.sl-end { margin-left: auto; }
.t1 { width: 27px; margin-left: 13px; }
.t2 { width: 138px; margin-left: 11px; }
.t3 { width: 27px; margin-left: 11px; }
.t4 { width: 84px; margin-left: 11px; }
.t5 { width: 138px; margin-left: 11px; }
.t6 { width: 26px; margin-left: 12px; }

.bottom { flex: 1; display: flex; border-top: 1px solid #5a5a5a; }
.mat-head { width: 928px; height: 20px; }
.coord-head { flex: 1; height: 20px; border-left: 3px solid #3a3a3a; padding-left: 9px; color: #9a9a9a; gap: 0; }
.coord-head .grip { margin-right: 0; }
.coord-head span:not(.grip) { width: 92px; padding-left: 7px; }

.panel {
  border: 1px solid #5c5c5c;
  border-right: 0;
  background: #444;
  display: flex;
  flex-direction: column;
}
.objects { height: 485px; flex: none; }
.attrs { flex: 1; border-bottom: 0; }
.panel .panel-head { border-bottom: 1px solid #2e2e2e; height: 23px; }

.list {
  flex: 1;
  padding-top: 2px;
  background:
    linear-gradient(#2a2a2a, #2a2a2a) 119px 0 / 1px 100% no-repeat,
    linear-gradient(#2a2a2a, #2a2a2a) 158px 0 / 1px 100% no-repeat;
}
.row { height: 20px; display: grid; grid-template-columns: 119px 40px 1fr; align-items: center; }
.row.odd { background-color: rgba(255,255,255,.035); }
.name { display: flex; align-items: center; height: 20px; white-space: nowrap; color: #bdbdbd; }
.hn { letter-spacing: -.45px; }
.tree { display: block; height: 20px; flex: none; }
.w37 { width: 37px; }
.w47 { width: 47px; }
.vis { display: flex; align-items: center; height: 20px; padding-left: 5px; }
.dot { width: 8px; height: 8px; border-radius: 50%; background: #818181; display: block; }
.mini { display: flex; flex-direction: column; gap: 3px; margin-left: 6px; }
.mini b { display: block; width: 5px; height: 5px; border-radius: 50%; background: #6c6c6c; }
.mini.red b { background: #d8535b; }
.flag { width: 10px; height: 10px; display: block; margin-left: 1px; }
.tags { display: flex; align-items: center; gap: 4px; padding-left: 2px; }
.tag-pts { width: 16px; height: 16px; display: block; }
.tag-tex { width: 17px; height: 16px; display: block; }
```
